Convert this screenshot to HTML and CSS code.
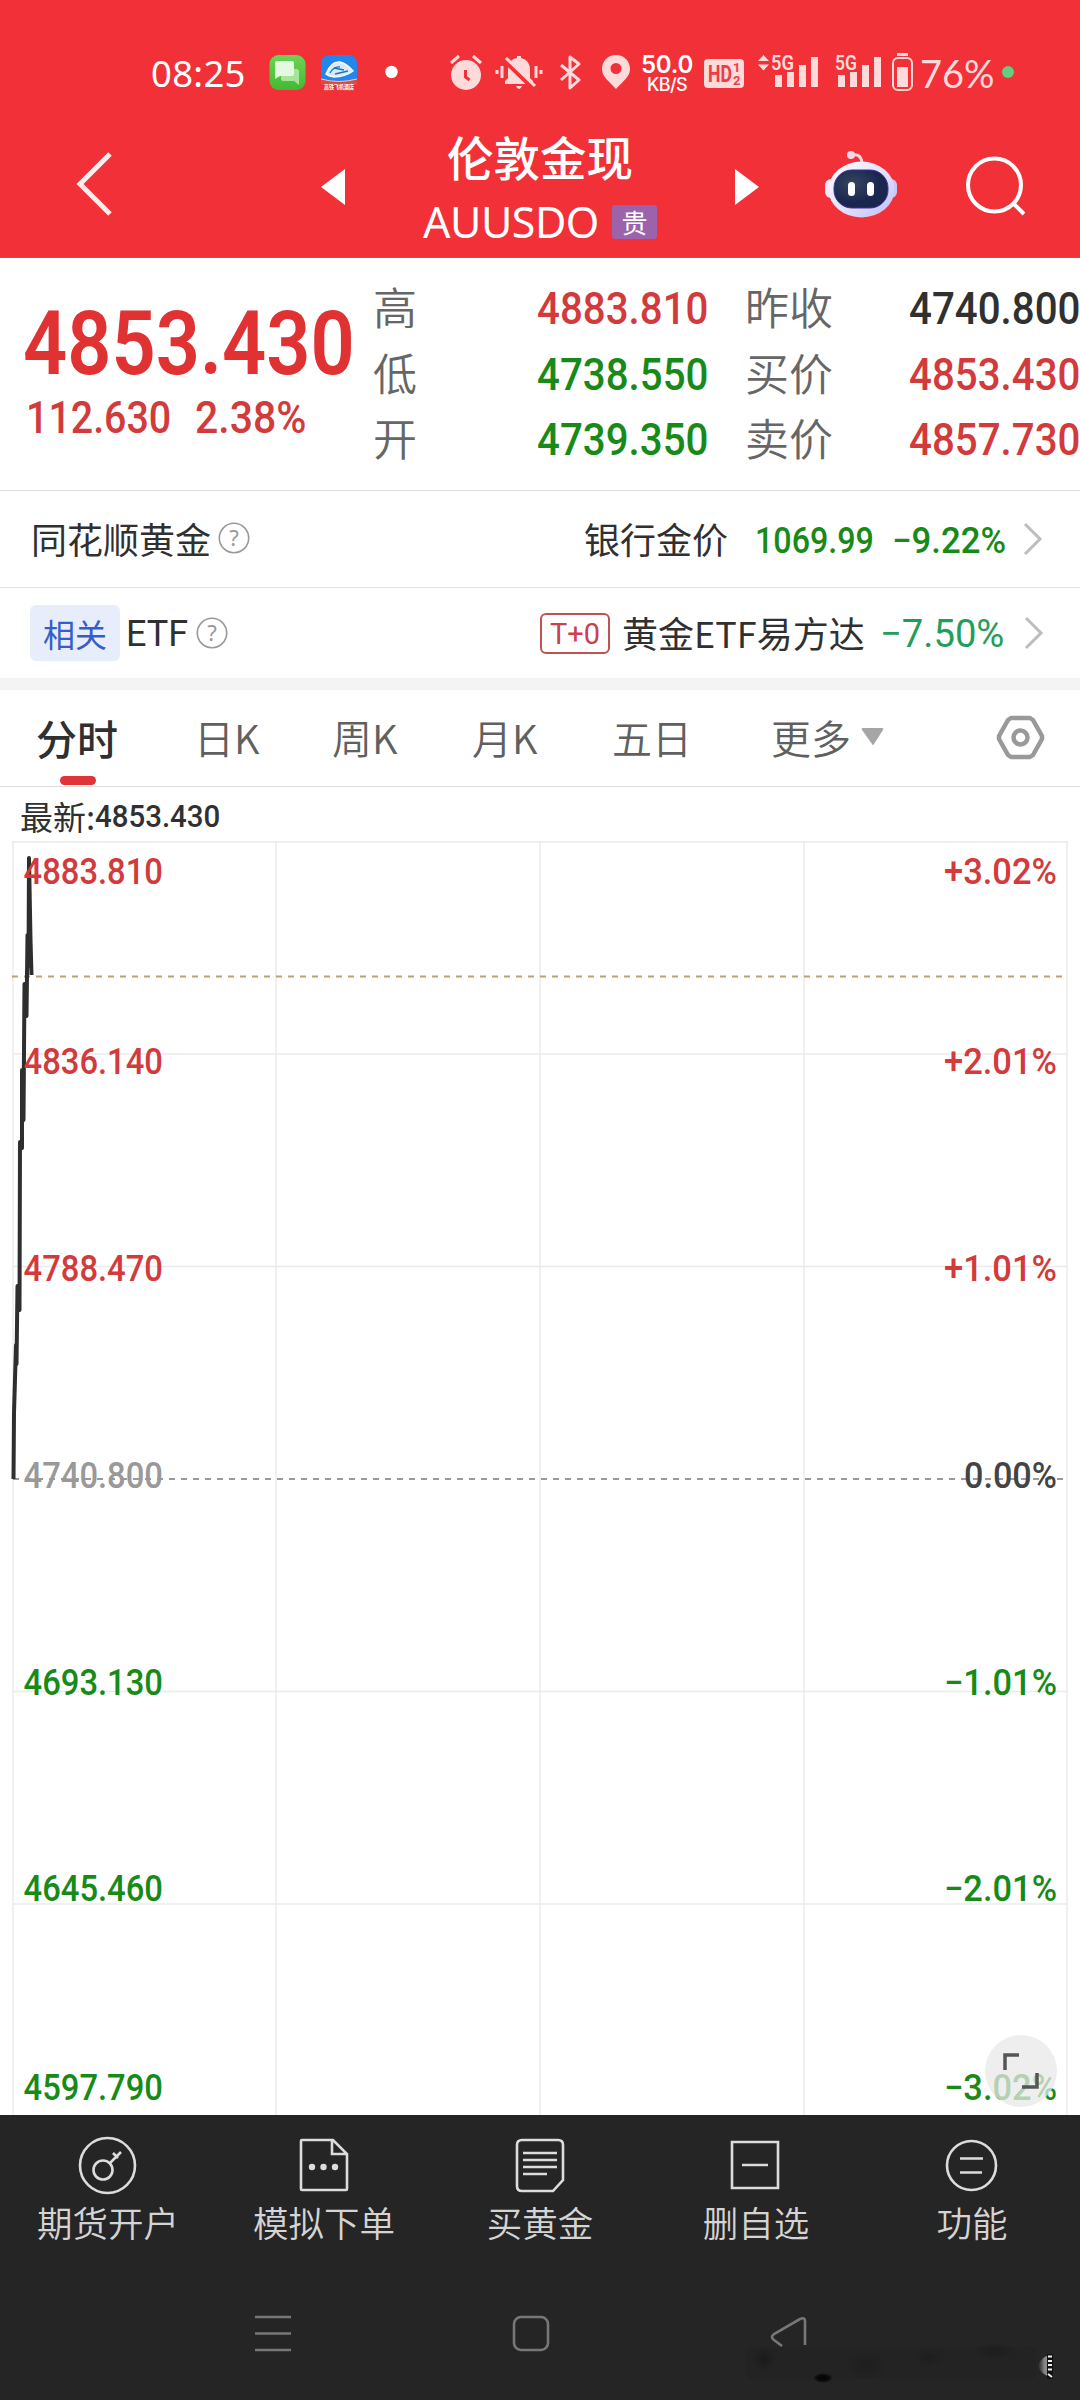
FILE: index.html
```html
<!DOCTYPE html>
<html lang="zh-CN">
<head>
<meta charset="utf-8">
<title>伦敦金现 AUUSDO</title>
<link rel="stylesheet" href="styles.css">
</head>
<body>
<div class="phone">
  <header class="header">
    <div class="status">
      <span class="clock">08:25</span>
      <svg width="38" height="38" viewBox="0 0 38 38"><defs><linearGradient id="sms" x2="0" y2="1"><stop stop-color="#6fd257"/><stop offset="1" stop-color="#43b92f"/></linearGradient></defs><rect x=".5" y="1" width="36" height="35" rx="9" fill="url(#sms)"/><path d="M12 15h16q2 0 2 2v14l-5-4H14q-2 0-2-2z" fill="#a6e49a"/><path d="M8 7h15q2 0 2 2v11q0 2-2 2H11l-5 3V9q0-2 2-2z" fill="#e5f9e0"/></svg>
      <svg width="38" height="38" viewBox="0 0 38 38"><path d="M9 1h18q9 0 9 9v17H0V10q0-9 9-9z" fill="#2385ee"/><path d="M0 25q18 7 36 0v6H0z" fill="#e8463e"/><path d="M0 25q18 5 36 0" stroke="#f6c9bd" fill="none"/><path d="M5 20q5-13 14-12 7 2 13 9-8 6-19 6-6-1-8-3z" fill="#d4ebff" stroke="#f3faff" stroke-width="1.500"/><path d="M9 19q4-7 10-6M14 20l13-3M13 14l10 2" fill="none" stroke="#2672b8" stroke-width="1.300"/><text x="3" y="34.500" font-size="6" fill="#fff" class="cjk" font-weight="700" textLength="30" lengthAdjust="spacingAndGlyphs">高铁飞机酒店</text></svg>
      <svg width="14" height="38"><circle cx="6.500" cy="18" r="6.200" fill="#fff"/></svg>
      <svg class="pale" width="34" height="38" viewBox="0 0 34 38"><circle cx="16" cy="21" r="15"/><path d="M1 9l8-7M31 9l-8-7" stroke="#ffdadb" stroke-width="3"/><path d="M15.500 16v7l4 3" fill="none" stroke="#f13037" stroke-width="3"/></svg>
      <svg class="pale" width="50" height="38" viewBox="0 0 50 38"><path d="M9 30V27l3-3V15q1-10 9-11V2h4v2q9 2 9 12v8l3 3v3zM20 32h6q-1 3-3 3t-3-3z"/><path d="M8 5l29 28" stroke="#f13037" stroke-width="6"/><path d="M10 4l29 28M1 16v4M6 12v12M40 12v12M45 16v4" stroke="#ffdadb" stroke-width="3"/></svg>
      <svg width="24" height="38" viewBox="0 0 24 38"><path d="M2 11l18 15-9 8V3l9 7L2 26" fill="none" stroke="#ffdadb" stroke-width="3" stroke-linejoin="round"/></svg>
      <svg class="pale" width="30" height="38" viewBox="0 0 30 38"><path fill-rule="evenodd" d="M14 1C6 1 0 7 0 15c0 8 7 12 14 20 7-8 14-12 14-20C28 7 22 1 14 1zm0 8a5.500 5.500 0 1 1 0 11 5.500 5.500 0 0 1 0-11z"/></svg>
      <span class="speed"><b>50.0</b><i>KB/S</i></span>
      <svg class="pale" width="42" height="38" viewBox="0 0 42 38"><rect y="5" width="40" height="29" rx="4"/><g fill="#ef3c42" font-weight="700"><text x="4" y="27.500" font-size="23" textLength="24" lengthAdjust="spacingAndGlyphs">HD</text><text x="29" y="18" font-size="13">1</text><text x="29" y="31" font-size="13">2</text></g></svg>
      <svg class="pale" width="62" height="38" viewBox="0 0 62 38"><path d="M0 7l5.500-6L11 7zM0 10.500l5.500 6 5.500-6z"/><text x="13" y="16" font-size="20.500" font-weight="600" textLength="23" lengthAdjust="spacingAndGlyphs">5G</text><path d="M17 21h7v12h-7zM29 18h7v15h-7zM41 11h7v22h-7zM53 3h7v30h-7z"/></svg>
      <svg class="pale" width="48" height="38" viewBox="0 0 48 38"><text y="16" font-size="20.500" font-weight="600" textLength="22" lengthAdjust="spacingAndGlyphs">5G</text><path d="M3 21h7v12H3zM15 18h7v15h-7zM27 11h7v22h-7zM39 3h7v30h-7z"/></svg>
      <svg class="pale" width="23" height="40" viewBox="0 0 23 40"><path d="M5 -1h11v3H5zM5 13h11v20H5z"/><rect x="1" y="4" width="19" height="32" rx="5" fill="none" stroke="#ffdadb" stroke-width="2"/></svg>
      <span class="pct">76%</span>
      <svg width="14" height="38"><circle cx="6" cy="18" r="6" fill="#62cf80"/></svg>
    </div>
    <div class="titlebar">
      <svg class="c1" width="38" height="66" viewBox="0 0 38 66"><path d="M34 2L4 32l30 30" fill="none" stroke="#ffecec" stroke-width="5"/></svg>
      <svg class="c2" width="25" height="36"><path d="M0 18L24 0v36z" fill="#fff"/></svg>
      <div class="name">
        <h1>伦敦金现</h1>
        <p><span class="code">AUUSDO</span><em>贵</em></p>
      </div>
      <svg class="c4" width="25" height="36"><path d="M24 18L0 0v36z" fill="#fff"/></svg>
      <svg class="c5" width="74" height="68" viewBox="0 0 74 68"><defs><linearGradient id="bot" x2="1" y2="1"><stop stop-color="#fff"/><stop offset=".6" stop-color="#dfdcfb"/><stop offset="1" stop-color="#bdbcf5"/></linearGradient><radialGradient id="face" cx=".35" cy=".35"><stop stop-color="#35465d"/><stop offset="1" stop-color="#1b2650"/></radialGradient></defs><path d="M27 4q9-2 10 8" fill="none" stroke="#f3d6e2" stroke-width="3"/><circle cx="26" cy="4" r="4" fill="#f3d9e6"/><rect x="0" y="28" width="12" height="19" rx="6" fill="#f0e7fa"/><rect x="60" y="28" width="12" height="19" rx="6" fill="#ccc5f6"/><ellipse cx="36.500" cy="38.500" rx="33" ry="28" fill="url(#bot)"/><rect x="9" y="19" width="54" height="38" rx="18" fill="url(#face)" stroke="#3b309d"/><rect x="23" y="31" width="7" height="14" rx="3.500" fill="#fff"/><rect x="42" y="31" width="7" height="14" rx="3.500" fill="#fff"/></svg>
      <svg class="c6" width="60" height="60" viewBox="0 0 60 60"><circle cx="28.500" cy="29" r="26.500" fill="none" stroke="#fff" stroke-width="4"/><path d="M47 47l11 11" stroke="#fff" stroke-width="4"/></svg>
    </div>
  </header>

  <section class="quote">
    <div class="last">
      <div class="price"><span class="num">4853.430</span></div>
      <div class="change"><span class="num">112.630</span><span class="num pc">2.38%</span></div>
    </div>
    <dl class="stats">
      <dt>高</dt><dd class="red"><span class="num">4883.810</span></dd><dt>昨收</dt><dd><span class="num">4740.800</span></dd>
      <dt>低</dt><dd class="green"><span class="num">4738.550</span></dd><dt>买价</dt><dd class="red"><span class="num">4853.430</span></dd>
      <dt>开</dt><dd class="green"><span class="num">4739.350</span></dd><dt>卖价</dt><dd class="red"><span class="num">4857.730</span></dd>
    </dl>
  </section>

  <section class="link gold">
    <span class="label">同花顺黄金</span>
    <svg class="help" width="32" height="32"><circle cx="16" cy="15" r="14.700"/><text x="16" y="22.500" text-anchor="middle">?</text></svg>
    <strong>银行金价</strong>
    <span class="cell v1"><span class="num">1069.99</span></span>
    <span class="cell v2"><span class="num">−9.22%</span></span>
    <svg width="20" height="34"><path class="chev" d="M2 2l15 15L2 32"/></svg>
  </section>
  <section class="link etf">
    <span class="tag">相关</span>
    <span class="label">ETF</span>
    <svg class="help" width="32" height="32"><circle cx="16" cy="16" r="14.700"/><text x="16" y="23.500" text-anchor="middle">?</text></svg>
    <span class="t0">T+0</span>
    <strong>黄金ETF易方达</strong>
    <span class="cell v3"><span class="num">−7.50%</span></span>
    <svg width="20" height="34"><path class="chev" d="M2 2l15 15L2 32"/></svg>
  </section>

  <nav class="tabs">
    <span class="active">分时</span><span>日K</span><span>周K</span><span>月K</span><span>五日</span>
    <span class="more">更多<svg width="24" height="20"><path d="M2 1h19q2 0 1 2L13 17q-1 2-2 0L1 3q-1-2 1-2z" fill="#a6a6a6"/></svg></span>
    <svg width="50" height="50" viewBox="0 0 50 50"><path d="M15 5h19l3 2 9 16v3l-9 16-3 2H15l-3-2L3 26v-3l9-16z" fill="none" stroke="#999" stroke-width="4.500" stroke-linejoin="round"/><circle cx="24.500" cy="24.500" r="7" fill="none" stroke="#999" stroke-width="4.500"/></svg>
  </nav>

  <div class="latest"><span>最新:</span><span class="num">4853.430</span></div>

  <div class="chart">
    <svg width="1080" height="1274" viewBox="0 841 1080 1274">
      <g class="grid"><path d="M12 842H1068M13 1054H1067M13 1266.500H1067M13 1691.500H1067M13 1904H1067M13 841V2115M276 841V2115M540 841V2115M804 841V2115M1067 841V2115"/></g>
      <path d="M12 976.500H1064" stroke="#b8a473" stroke-width="2" stroke-dasharray="6 6"/>
      <path d="M13 1479H1064" stroke="#999" stroke-width="2" stroke-dasharray="6 6"/>
      <path class="line" d="M13.500 1479L14 1413 16 1345 16.500 1364 17.500 1286 19.500 1310 20 1142 22 1148 22 1070 23.500 1120 24.500 984 26.500 1016 27.500 935 28.500 966 29 858 30.500 940 31.500 975"/>
      <g class="axis">
        <g class="red"><text x="23.500" y="884" textLength="139.500" lengthAdjust="spacingAndGlyphs">4883.810</text><text x="23.500" y="1074" textLength="139.500" lengthAdjust="spacingAndGlyphs">4836.140</text><text x="23.500" y="1281" textLength="139.500" lengthAdjust="spacingAndGlyphs">4788.470</text></g>
        <text x="23.500" y="1488" textLength="139.500" lengthAdjust="spacingAndGlyphs" fill="#999">4740.800</text>
        <g class="green"><text x="23.500" y="1695" textLength="139.500" lengthAdjust="spacingAndGlyphs">4693.130</text><text x="23.500" y="1901" textLength="139.500" lengthAdjust="spacingAndGlyphs">4645.460</text><text x="23.500" y="2100" textLength="139.500" lengthAdjust="spacingAndGlyphs">4597.790</text></g>
        <g class="red"><text x="944" y="884" textLength="113" lengthAdjust="spacingAndGlyphs">+3.02%</text><text x="944" y="1074" textLength="113" lengthAdjust="spacingAndGlyphs">+2.01%</text><text x="944" y="1281" textLength="113" lengthAdjust="spacingAndGlyphs">+1.01%</text></g>
        <text x="964" y="1488" textLength="93" lengthAdjust="spacingAndGlyphs" fill="#444">0.00%</text>
        <g class="green"><text x="944" y="1695" textLength="113" lengthAdjust="spacingAndGlyphs">−1.01%</text><text x="944" y="1901" textLength="113" lengthAdjust="spacingAndGlyphs">−2.01%</text><text x="944" y="2100" textLength="113" lengthAdjust="spacingAndGlyphs">−3.02%</text></g>
      </g>
    </svg>
    <button class="expand" aria-label="全屏"><svg width="36" height="36"><path d="M2 17V2H16M34 20V34H19" fill="none" stroke="#555" stroke-width="3.500"/></svg></button>
  </div>

  <footer class="footer">
    <div class="actions">
      <a><svg viewBox="0 0 60 60"><circle cx="29.500" cy="30.500" r="27.500"/><circle cx="25" cy="35" r="9.500"/><path d="M32 28L43 17M35 18l5 5"/></svg>期货开户</a>
      <a><svg viewBox="0 0 60 60"><path d="M8 5H39L53 19V54q0 1-1 1H8q-1 0-1-1V6q0-1 1-1zM38 5V19H53"/><g fill="#dcdcdc" stroke="none"><circle cx="18" cy="32" r="3.200"/><circle cx="29.500" cy="32" r="3.200"/><circle cx="41" cy="32" r="3.200"/></g></svg>模拟下单</a>
      <a><svg viewBox="0 0 60 60"><path d="M12 5H48q5 0 5 5V45L43 56H12q-5 0-5-5V10q0-5 5-5zM13 18H47M13 25H47M13 32H47M13 39H37"/></svg>买黄金</a>
      <a><svg viewBox="0 0 60 60"><path d="M6 7H52V53H6zM16 30H42"/></svg>删自选</a>
      <a><svg viewBox="0 0 60 60"><circle cx="29.500" cy="30.500" r="24.500"/><path d="M18 23.500H41M18 37.500H40"/></svg>功能</a>
    </div>
    <div class="system">
      <svg class="s1" width="36" height="40"><path d="M0 4H36M0 20.500H36M0 37H36"/></svg>
      <svg class="s2" width="38" height="40"><rect x="2" y="4" width="34" height="33" rx="7"/></svg>
      <svg class="s3" width="312" height="70"><defs><linearGradient id="fade"><stop stop-color="#777" stop-opacity="0"/><stop offset=".5" stop-color="#858585"/><stop offset="1" stop-color="#929292"/></linearGradient><radialGradient id="dim"><stop stop-color="#1a1a1a"/><stop offset="1" stop-color="#1a1a1a" stop-opacity="0"/></radialGradient><radialGradient id="blot"><stop stop-color="#030303"/><stop offset=".6" stop-color="#0a0a0a"/><stop offset="1" stop-color="#0a0a0a" stop-opacity="0"/></radialGradient></defs><path d="M38 33L30 27q-4-3 0-6L56 6q5-2 5 2V32"/><g stroke="none"><rect x="2" y="34" width="290" height="32" rx="6" fill="#232323"/><ellipse cx="20" cy="46" rx="12" ry="12" fill="url(#dim)"/><ellipse cx="122" cy="52" rx="22" ry="14" fill="url(#dim)" opacity=".6"/><ellipse cx="185" cy="44" rx="16" ry="10" fill="url(#dim)" opacity=".6"/><ellipse cx="250" cy="38" rx="20" ry="9" fill="url(#dim)" opacity=".7"/><ellipse cx="79" cy="65" rx="10" ry="5" fill="url(#blot)"/><path d="M294 53q3-10 13-11v22q-10-2-13-11z" fill="url(#fade)"/></g><path d="M306 41v25" stroke="#111" stroke-width="6"/><path d="M304 43.500h4M304 48h4M304 52h4M304 56.500h4M304 61l4 3" stroke="#f0f0f0" stroke-width="1.800"/></svg>
    </div>
  </footer>
</div>
</body>
</html>
```
FILE: styles.css
```css
* { box-sizing: border-box; }
body { margin: 0; background: #fff; color: #303030; font-family: "Noto Sans", "Noto Sans CJK SC", sans-serif; }
h1, p, dl, dt, dd { margin: 0; }
svg { display: block; flex: none; overflow: visible; }
.cjk { font-family: "Noto Sans CJK SC", sans-serif; }
.phone { width: 1080px; height: 2400px; display: flex; flex-direction: column; overflow: hidden; }
.num { display: inline-block; font-family: Roboto, sans-serif; font-weight: 500; white-space: nowrap; transform: scaleX(.895); transform-origin: left center; }
.red { color: #d23a3c; fill: #d23a3c; }
.green { color: #178a17; fill: #178a17; }

/* header */
.header { height: 258px; background: #f13037; color: #fff; border-bottom: 1px solid #b9514c; }
.status { height: 92px; padding-top: 54px; display: grid; grid-template-columns: 118px 52px 64px 65px 46px 63px 43px 39px 63px 54px 77px 57px 28px 82px 14px; margin-left: 151px; }
.status > * { align-self: start; }
.clock { font-family: "Noto Sans", sans-serif; font-size: 36.500px; line-height: 38px; letter-spacing: .3px; }
.pale { fill: #ffdadb; font-family: Roboto, sans-serif; }
.speed { display: flex; flex-direction: column; width: 52px; align-items: center; }
.speed b { font: 600 24px/22px Inter, sans-serif; letter-spacing: -.3px; }
.speed i { font: 500 18px/18px Inter, sans-serif; letter-spacing: -.6px; }
.pct { font-family: Lato, sans-serif; font-size: 38px; line-height: 39px; color: #ffdadb; }
.titlebar { height: 165px; display: grid; grid-template-columns: 76px 245px 91px 323px 90px 141px 60px; }
.titlebar svg { align-self: start; }
.c1 { grid-column: 2; margin-top: 60px; }
.c2 { grid-column: 3; margin-top: 77px; }
.name { display: flex; flex-direction: column; grid-column: 4; width: 256px; }
.c4 { grid-column: 5; margin-top: 77px; }
.c5 { grid-column: 6; margin-top: 59px; }
.c6 { grid-column: 7; margin-top: 64px; }
.name h1 { font: 500 46.500px/56px "Noto Sans CJK SC", sans-serif; text-align: center; margin-top: 36px; }
.name p { display: flex; align-items: center; justify-content: space-between; height: 64px; margin-top: 6px; padding: 0 11px; width: 256px; }
.name .code { font-size: 43px; line-height: 60px; letter-spacing: -.5px; }
.name em { font: 400 26px/34px "Noto Sans CJK SC", sans-serif; width: 45px; height: 34px; background: #9c62aa; border-radius: 3px; text-align: center; }

/* quote */
.quote { height: 233px; display: flex; border-bottom: 1px solid #dedede; }
.last { width: 373px; padding: 38px 0 0 23px; }
.price { height: 87px; font-size: 89px; line-height: 87px; color: #e03133; }
.price .num { font-weight: 600; transform: scaleX(.87); }
.change { display: grid; grid-template-columns: 169px 150px; font-size: 45px; line-height: 70px; color: #d23a3c; padding-left: 3px; }
.change .num { transform: scaleX(.875); }
.change .pc { transform: scaleX(.91); }
.stats { display: grid; grid-template-columns: 164px 208px 164px 170px; grid-auto-rows: 65.500px; padding-top: 17px; line-height: 65px; }
.stats dt { font-family: "Noto Sans CJK SC", sans-serif; font-weight: 350; font-size: 44px; line-height: 62px; color: #666; }
.stats dd { font-size: 45px; line-height: 64px; }

/* linked products */
.link { display: flex; align-items: center; height: 97px; padding-left: 31px; border-bottom: 1px solid #e2e2e2; font-size: 36px; }
.link .label, .link strong { font-family: "Noto Sans CJK SC", sans-serif; font-weight: 400; white-space: nowrap; line-height: 50px; padding-bottom: 2px; }
.link strong { font-size: 36px; }
.help { fill: none; stroke: #999; stroke-width: 1.600; }
.help text { font: 22px "Noto Sans", sans-serif; fill: #999; stroke: none; }
.chev { fill: none; stroke: #bdbdbd; stroke-width: 3; }
.gold .help { margin-left: 7px; }
.gold strong { margin-left: 334px; }
.cell { display: block; line-height: 48px; }
.gold .cell { padding-top: 2px; }
.v1 { margin-left: 27px; width: 137px; color: #178a17; }
.v2 { width: 131px; color: #178a17; }
.v2 .num { transform: scaleX(.965); }
.etf { height: 102px; padding-left: 30px; border-bottom: 12px solid #f4f4f4; }
.tag { width: 90px; height: 56px; border-radius: 6px; background: #e8edfb; color: #355ecb; font: 400 32px/56px "Noto Sans CJK SC", sans-serif; text-align: center; }
.etf .label { font-family: Roboto, sans-serif; margin-left: 6px; width: 68px; padding: 2px 0 0; }
.etf .help { margin-left: 2px; }
.t0 { margin-left: 312px; width: 70px; height: 41px; border: 2px solid #bd5352; border-radius: 6px; color: #cb4050; font: 400 29px/38px Roboto, sans-serif; text-align: center; }
.etf strong { margin-left: 12px; width: 258px; }
.v3 { width: 144px; font-size: 39px; color: #1f9e5c; }
.v3 .num { font-weight: 400; transform: scaleX(.98); }

/* period tabs */
.tabs { height: 97px; padding-left: 36px; display: grid; grid-template-columns: 158px 138px 140px 140px 159px 225px 50px; align-items: center; border-bottom: 1px solid #dedede; font: 350 40px/58px "Noto Sans CJK SC", sans-serif; color: #606060; }
.tabs > span { margin-top: -2px; }
.tabs .active { position: relative; font-weight: 500; font-size: 41px; color: #303030; }
.tabs .active::after { content: ""; position: absolute; left: 24px; top: 68px; width: 36px; height: 9px; border-radius: 5px; background: #df3438; }
.more { display: flex; align-items: center; gap: 10px; }

/* chart */
.latest { height: 54px; padding-left: 20px; padding-top: 4px; display: flex; align-items: center; font: 400 33px/50px "Noto Sans CJK SC", sans-serif; }
.latest .num { font-size: 32px; line-height: 50px; transform: scaleX(.92); }
.chart { position: relative; height: 1274px; }
.grid { fill: none; stroke: #ebebeb; stroke-width: 1.500; }
.line { fill: none; stroke: #2e2e2e; stroke-width: 4; stroke-linejoin: round; }
.axis text { font: 500 36px Roboto, sans-serif; }
.expand { position: absolute; left: 985px; top: 1194px; width: 72px; height: 72px; padding: 0; border: 0; border-radius: 50%; background: rgba(232, 232, 232, .75); display: flex; align-items: center; justify-content: center; }

/* footer */
.footer { height: 285px; background: #252525; color: #d4d4d4; }
.actions { display: grid; grid-template-columns: repeat(5, 216px); height: 180px; }
.actions a { display: flex; flex-direction: column; align-items: center; padding-top: 20px; font: 350 35.500px/54px "Noto Sans CJK SC", sans-serif; }
.actions svg { width: 60px; height: 60px; fill: none; stroke: #dcdcdc; stroke-width: 2.600; }
.system { display: grid; grid-template-columns: 257px 232px 312px; margin-left: 255px; padding-top: 18px; }
.system svg { fill: none; stroke: #777; stroke-width: 2.600; }
```
